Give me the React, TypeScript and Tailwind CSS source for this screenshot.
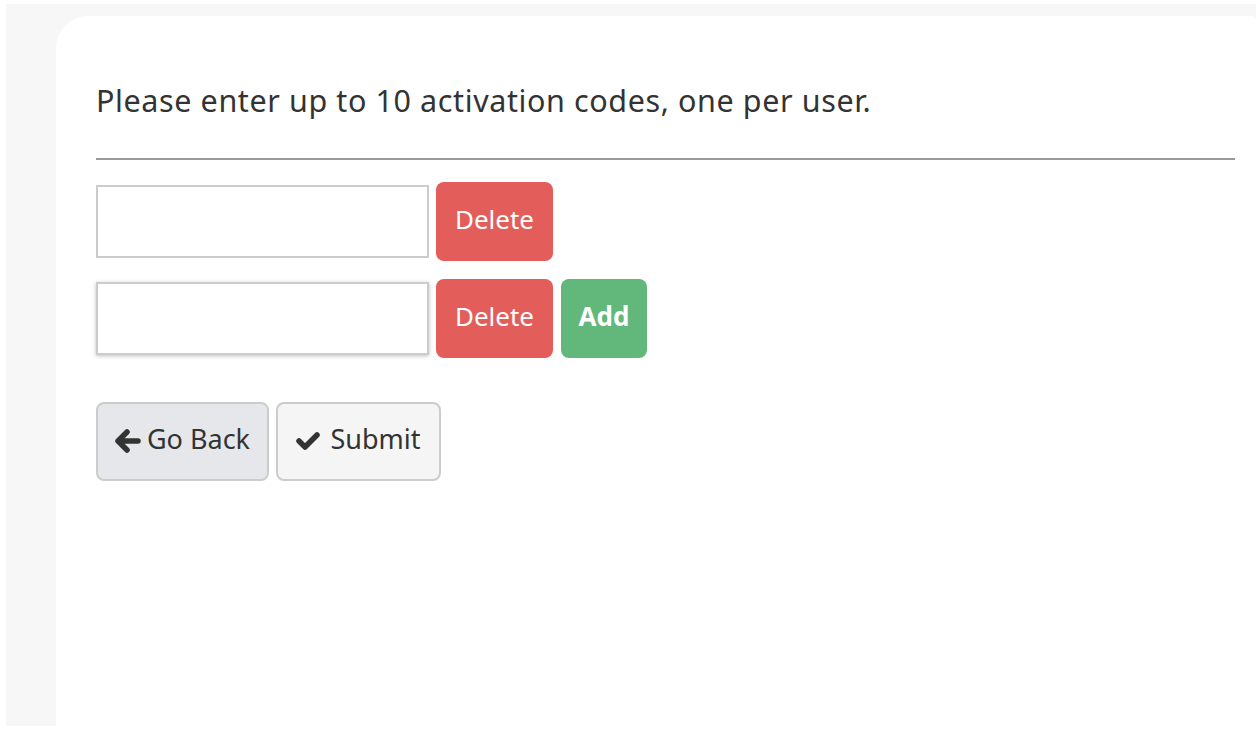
import React from "react";

export default function App() {
  const font = { fontFamily: '"Noto Sans", "DejaVu Sans", sans-serif' };
  return (
    <div className="w-[1260px] h-[732px] bg-white pt-[4px] pl-[6px] pr-[4px] pb-[6px]" style={font}>
      <div className="w-full h-full bg-[#f7f7f7] pt-[12px] pl-[50px]">
        <div className="w-full h-full bg-white rounded-tl-[32px] rounded-tr-[4px] pl-[40px] pr-[21px] pt-[66px]">
          <p className="text-[30.5px] leading-[36px] text-[#333] tracking-[0.6px]">
            Please enter up to 10 activation codes, one per user.
          </p>
          <div className="mt-[40px] h-[2px] bg-[#999]" />
          <div className="mt-[22px] flex flex-col gap-[18px]">
            <div className="flex items-center gap-[7px]">
              <input className="w-[333px] h-[73px] border-2 border-[#ccc] outline-none" />
              <button className="h-[79px] w-[117px] rounded-[8px] bg-[#e35d5a] text-white text-[26px] pb-[5px]">Delete</button>
            </div>
            <div className="flex items-center gap-[8px]">
              <input className="w-[333px] h-[73px] border-2 border-[#ccc] outline-none shadow-[0_1px_4px_rgba(0,0,0,0.25)]" />
              <button className="h-[79px] w-[117px] rounded-[8px] bg-[#e35d5a] text-white text-[26px] -ml-[1px] pb-[5px]">Delete</button>
              <button className="h-[79px] w-[86px] rounded-[8px] bg-[#62b87a] text-white text-[26px] font-bold pb-[5px]">Add</button>
            </div>
          </div>
          <div className="mt-[44px] flex gap-[7px]">
            <button className="h-[79px] w-[173px] rounded-[8px] bg-[#e6e7ea] border-2 border-[#ccc] text-[#333] text-[27px] flex items-center justify-center gap-[6px] pb-[4px]">
              <svg width="26" height="24" viewBox="0 0 26 24" className="mt-[3px]">
                <path d="M12 3 L3 12 L12 21 M3.5 12 H23" fill="none" stroke="#333" strokeWidth="5.5" strokeLinecap="round" strokeLinejoin="round" />
              </svg>
              Go Back
            </button>
            <button className="h-[79px] w-[165px] rounded-[8px] bg-[#f5f5f5] border-2 border-[#ccc] text-[#333] text-[27px] flex items-center justify-center gap-[10px] pb-[4px]">
              <svg width="24" height="20" viewBox="0 0 24 20" className="mt-[3px]">
                <path d="M3 10 L9 16 L21 4" fill="none" stroke="#333" strokeWidth="5.5" strokeLinecap="round" strokeLinejoin="round" />
              </svg>
              Submit
            </button>
          </div>
        </div>
      </div>
    </div>
  );
}
